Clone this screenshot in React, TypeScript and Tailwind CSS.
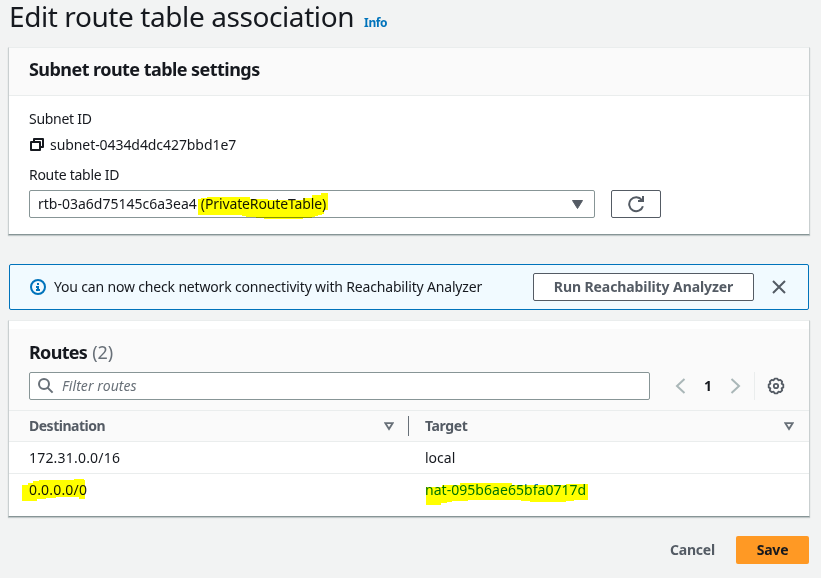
import type { ReactNode } from 'react';

function CopyIcon() {
  return (
    <svg width="15" height="16" viewBox="0 0 15 16" fill="none" stroke="#16191f" strokeWidth="2" strokeLinejoin="round">
      <path d="M2 5h9v8H2z" />
      <path d="M5 5V2h9v8h-3" />
    </svg>
  );
}

function RefreshIcon() {
  return (
    <svg width="18" height="18" viewBox="0 0 18 18" fill="none" stroke="#545b64" strokeWidth="2">
      <path d="M15.9 11.2A7 7 0 1 1 14.8 5" />
      <path d="M11 6h5.7M16 1v6" />
    </svg>
  );
}

function InfoIcon() {
  return (
    <svg width="16" height="16" viewBox="0 0 16 16" fill="none" stroke="#0073bb" strokeWidth="2">
      <circle cx="8" cy="8" r="7" />
      <path d="M8 4v2M6 8h2v4M6 11h4" />
    </svg>
  );
}

function SearchIcon() {
  return (
    <svg width="16" height="16" viewBox="0 0 16 16" fill="none" stroke="#687078" strokeWidth="2">
      <circle cx="6" cy="6" r="5" />
      <path d="M9.600 9.600l5 5" />
    </svg>
  );
}

function GearIcon() {
  return (
    <svg width="18" height="18" viewBox="0 0 18 18" fill="none" stroke="#545b64" strokeWidth="1.8" strokeLinejoin="round">
      <path d="M7.600 1.700h2.800l1 1.700 1.900-.6 1.900 1.900-.6 1.900 1.700 1v2.800l-1.700 1 .6 1.900-1.900 1.900-1.900-.6-1 1.700H7.600l-1-1.700-1.900.6-1.900-1.900.6-1.900-1.700-1V7.600l1.700-1-.6-1.900 1.900-1.900 1.900.6z" />
      <circle cx="9" cy="9" r="2.200" />
    </svg>
  );
}

function SortIcon() {
  return (
    <svg width="10" height="9" viewBox="0 0 10 9" fill="none" stroke="#687078" strokeWidth="1.8">
      <path d="M1.4 1.2h7.2L5 7z" />
    </svg>
  );
}

function Marker({ className, points, width, height }: { className: string; points: string; width: number; height: number }) {
  return (
    <svg className={`pointer-events-none absolute mix-blend-multiply ${className}`} width={width} height={height} viewBox={`0 0 ${width} ${height}`} shapeRendering="crispEdges">
      <polygon points={points} fill="#ffff00" />
    </svg>
  );
}

function Card({ className, children }: { className: string; children: ReactNode }) {
  return (
    <section className={`border border-t-[#eaeded] border-r-[#c9cfd0] border-b-[#879596] border-l-[#c9cfd0] bg-white shadow-[0_1px_1px_0_rgba(0,28,36,0.2)] ${className}`}>
      {children}
    </section>
  );
}

export default function App() {
  return (
    <main className="flex h-[578px] w-[821px] flex-col bg-[#f2f3f3] pr-[11px] pl-2 font-['Noto_Sans',sans-serif] text-[14px] leading-[22px] text-[#16191f]">
      <header className="flex h-[47px] shrink-0 items-baseline pl-px whitespace-nowrap">
        <h1 className="text-[28px] leading-[32px] font-normal tracking-[-0.41px]">Edit route table association</h1>
        <a className="ml-[10px] text-[12px] font-bold tracking-[-0.4px] text-[#0073bb]">Info</a>
      </header>

      <Card className="h-[188px] w-[802px] shrink-0">
        <h2 className="h-[48px] border-b border-[#eaeded] bg-[#fafafa] pl-5 text-[18px] leading-[42px] font-bold tracking-[-0.55px] whitespace-nowrap">
          <span>Subnet route table settings</span>
        </h2>
        <div className="flex flex-col px-5 pt-3 whitespace-nowrap">
          <div><span className="tracking-[-0.28px]">Subnet ID</span></div>
          <div className="mt-1 flex items-center gap-[6px]">
            <CopyIcon />
            <span className="tracking-[-0.07px]">subnet-0434d4dc427bbd1e7</span>
          </div>
          <div className="mt-2"><span className="tracking-[-0.28px]">Route table ID</span></div>
          <div className="mt-1 flex gap-4">
            <div className="relative flex h-7 w-[566px] items-center rounded-[2px] border border-[#879596] pl-2">
              <span>rtb-03a6d75145c6a3ea4</span>
              <span className="ml-1 tracking-[-0.12px]">(PrivateRouteTable)</span>
              <svg className="mr-[11px] ml-auto" width="11" height="9" viewBox="0 0 11 9">
                <path d="M.5.5h10L5.5 8.500z" fill="#545b64" stroke="#545b64" strokeLinejoin="round" />
              </svg>
              <Marker className="top-[2px] left-[168px]" width={130} height={27} points="0,6 12,4 52,4 52,6 70,6 70,7 105,7 105,5 114,5 114,2 123,2 123,0 130,0 130,17 126,17 126,21 118,23 112,25 98,26 66,26 66,25 50,24 42,22 0,22" />
            </div>
            <button className="flex h-7 w-[50px] items-center justify-center rounded-[2px] border border-[#545b64]"><RefreshIcon /></button>
          </div>
        </div>
      </Card>

      <div className="mt-[29px] ml-px flex h-[46px] w-[800px] shrink-0 items-center rounded-[2px] border border-[#0073bb] bg-[#f1faff] pl-5 whitespace-nowrap">
        <InfoIcon />
        <span className="ml-2 tracking-[-0.17px]">You can now check network connectivity with Reachability Analyzer</span>
        <button className="ml-auto flex h-7 w-[221px] items-center justify-center rounded-[2px] border border-[#545b64] bg-white font-bold text-[#545b64]"><span className="tracking-[-0.09px]">Run Reachability Analyzer</span></button>
        <svg className="mr-[22px] ml-[18px]" width="14" height="14" viewBox="0 0 14 14" fill="none" stroke="#545b64" strokeWidth="2"><path d="M1 1l12 12M13 1L1 13" /></svg>
      </div>

      <Card className="mt-[10px] h-[197px] w-[802px] shrink-0">
        <div className="mt-2 flex h-[82px] flex-col border-b border-[#eaeded] bg-[#fafafa] px-5 pt-3">
          <h2 className="flex h-[22px] text-[18px] leading-[22px] font-bold whitespace-nowrap">
            <span className="tracking-[-0.7px]">Routes</span>
            <span className="ml-[5px] font-normal text-[#687078]">(2)</span>
          </h2>
          <div className="mt-[9px] flex h-7 items-center">
            <div className="flex h-7 w-[621px] items-center rounded-[2px] border border-[#879596] bg-white pl-2">
              <SearchIcon />
              <span className="ml-2 tracking-[0.08px] text-[#687078] italic">Filter routes</span>
            </div>
            <svg className="ml-[25px]" width="11" height="16" viewBox="0 0 11 16" fill="none" stroke="#aab7b8" strokeWidth="2"><path d="M9.500 1L2 8l7.500 7" /></svg>
            <span className="w-[44px] text-center font-bold">1</span>
            <svg width="11" height="16" viewBox="0 0 11 16" fill="none" stroke="#aab7b8" strokeWidth="2"><path d="M1.500 1L9 8l-7.500 7" /></svg>
            <div className="ml-[13px] h-7 w-px bg-[#eaeded]" />
            <div className="ml-3"><GearIcon /></div>
          </div>
        </div>
        <div className="flex h-[31px] items-center border-b border-[#eaeded] bg-[#fafafa] pl-5 font-bold text-[#545b64]">
          <div className="flex w-[379px] items-center justify-between pr-[14px]"><span className="tracking-[-0.5px]">Destination</span><SortIcon /></div>
          <div className="h-5 w-px bg-[#687078]" />
          <div className="flex flex-1 items-center justify-between pr-[15px] pl-4"><span className="tracking-[-0.4px]">Target</span><SortIcon /></div>
        </div>
        <div className="flex h-8 items-center border-b border-[#eaeded] pl-5">
          <div className="w-[396px]"><span className="tracking-[0.2px]">172.31.0.0/16</span></div>
          <span>local</span>
        </div>
        <div className="flex h-8 items-center pl-5">
          <div className="relative w-[396px]">
            <span className="tracking-[0.18px]">0.0.0.0/0</span>
            <Marker className="top-0 left-[-7px]" width={64} height={23} points="0,6 6,6 6,4 11,4 11,2 22,1 52,1 52,0 60,0 63,1 63,20 57,20 57,18 34,18 34,19 24,19 24,20 15,20 15,22 0,22" />
          </div>
          <div className="relative text-[#0073bb]">
            <span className="tracking-[0.04px]">nat-095b6ae65bfa0717d</span>
            <Marker className="top-[4px] left-[1px]" width={162} height={23} points="0,4 16,4 16,2 34,2 34,0 86,0 86,2 140,2 140,1 162,1 162,17 148,17 148,18 132,19 104,19 104,18 86,17 42,17 42,18 26,18 26,19 15,20 15,22 0,22" />
          </div>
        </div>
      </Card>

      <footer className="mt-[19px] flex h-7 shrink-0 items-center justify-end pr-px font-bold">
        <span className="mr-[21px] tracking-[-0.2px] text-[#545b64]">Cancel</span>
        <button className="flex h-7 w-[73px] items-center justify-center rounded-[2px] bg-[#ff9924]"><span className="tracking-[-0.2px]">Save</span></button>
      </footer>
    </main>
  );
}
